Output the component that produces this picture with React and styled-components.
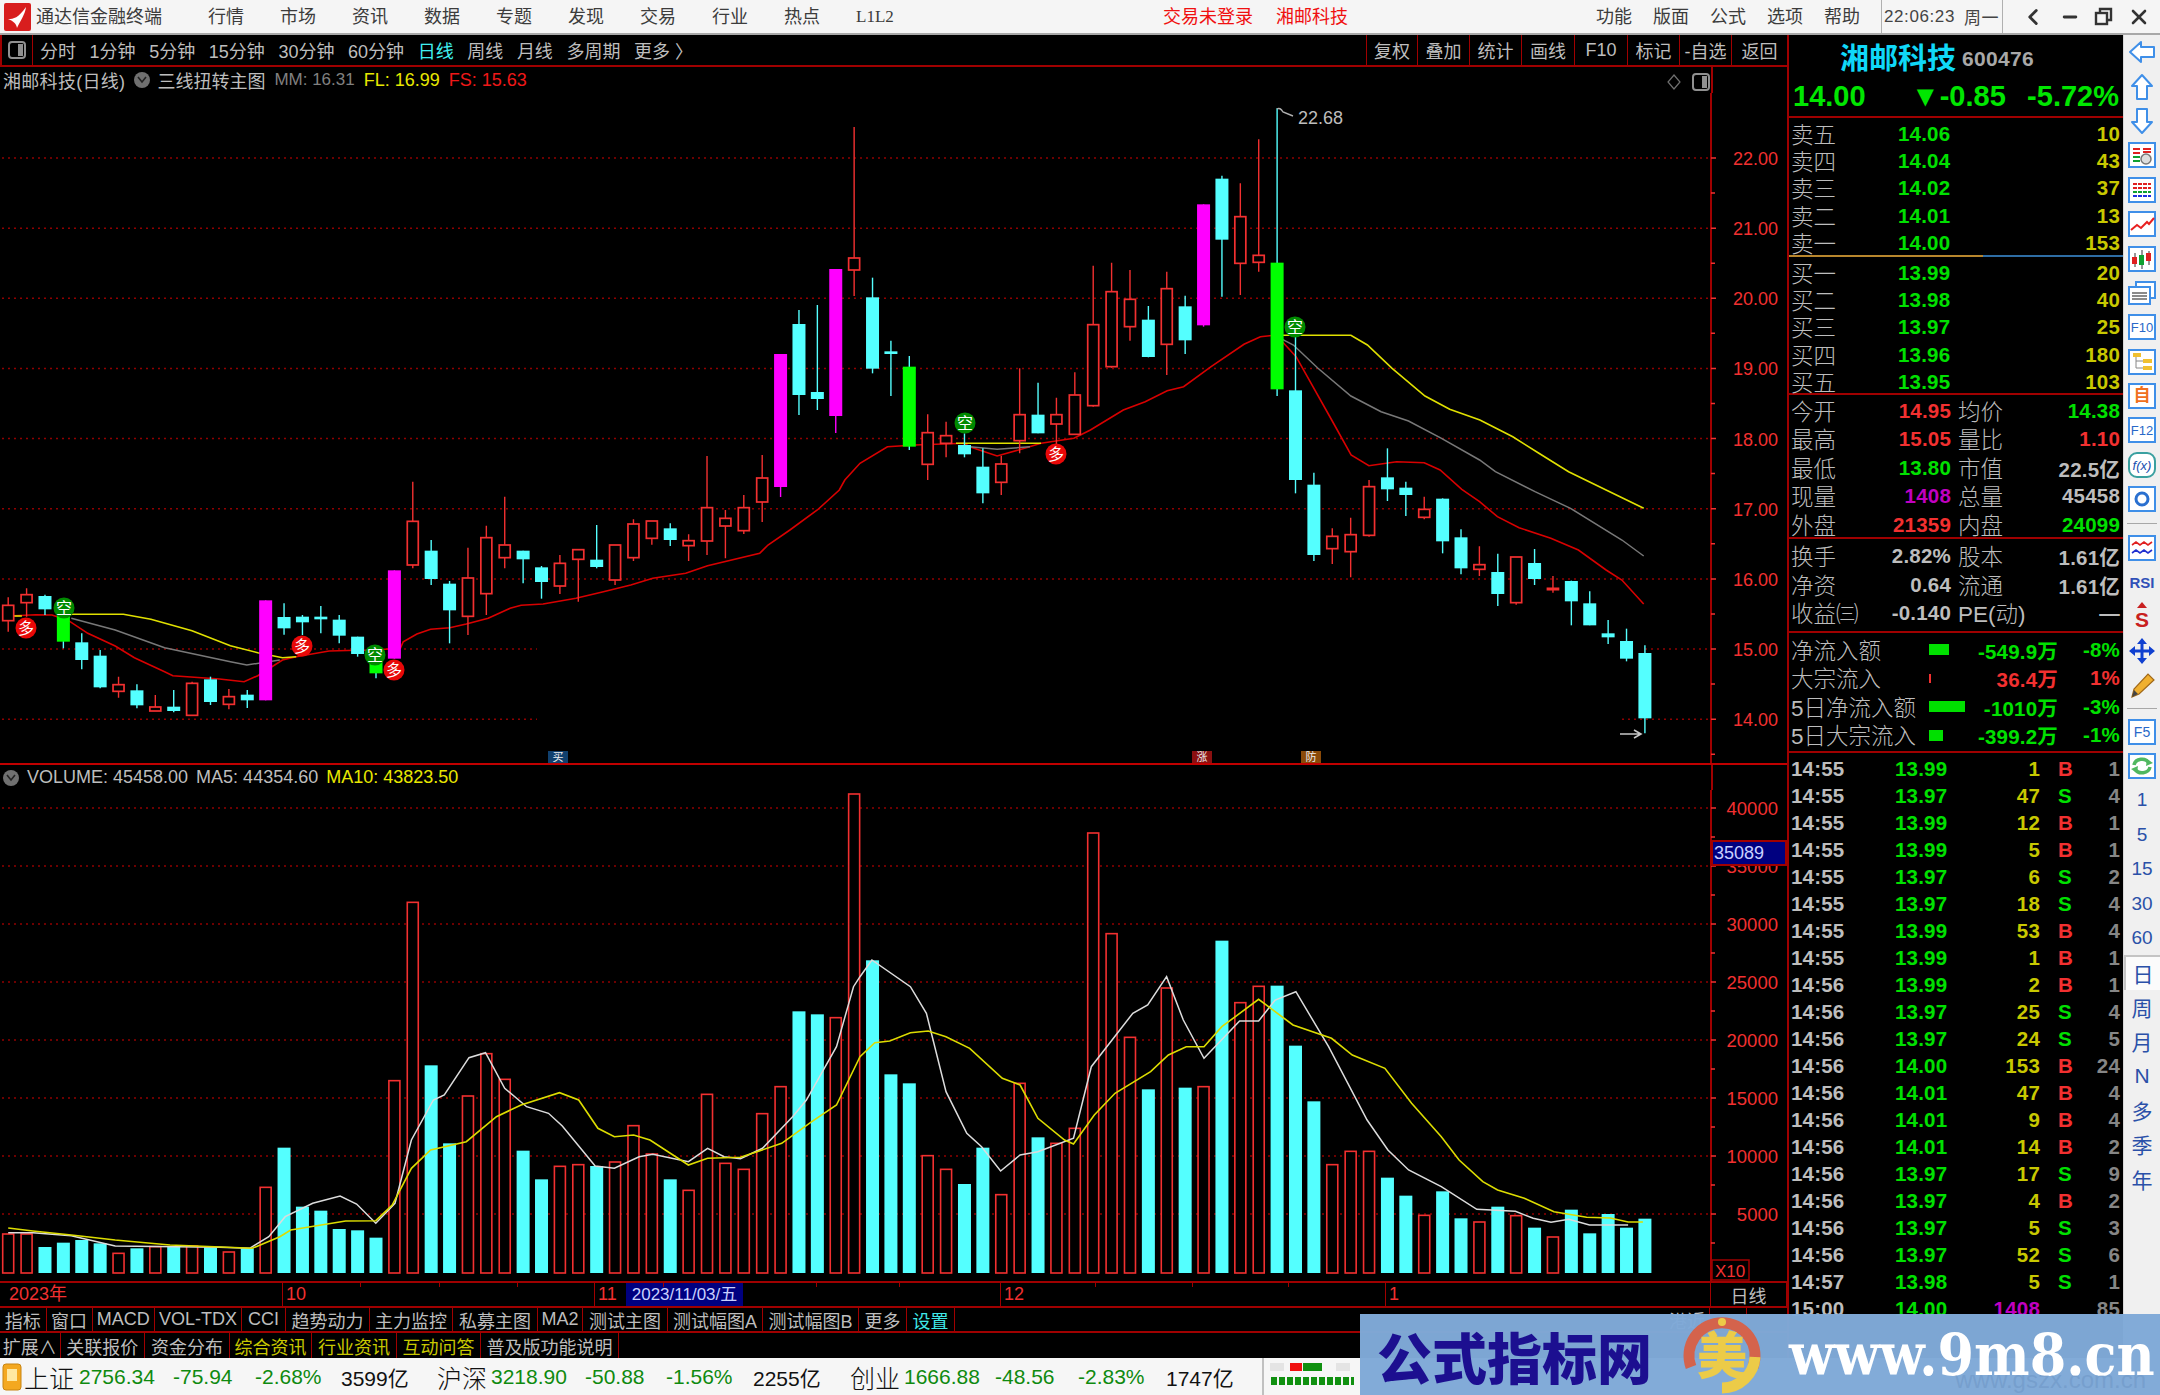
import React from 'react'
import styled, { createGlobalStyle } from 'styled-components'
import { ChevronLeft, Minus, X as CloseIcon } from 'lucide-react'

const SANS = `"Liberation Sans", "Noto Sans CJK SC", sans-serif`
const DARK_RED = '#a00000'
const GRID_RED = '#900000'
const UP = '#f23030'
const CYAN = '#54ffff'
const GREEN = '#00e000'
const YELLOW = '#c8c800'
const GRAY = '#bdbdbd'

const GlobalStyle = createGlobalStyle`
  html, body { margin: 0; padding: 0; background: #000; }
  body { font-family: ${SANS}; }
`

// ---------- chart data, traced off the screenshot ----------
// zones: how a traced crop maps back on to the page
const ZONES = {
  a: { x0: 0, fx: 1.823, y0: 480 },
  b: { x0: 860, fx: 1.823, y0: 100 },
  c: { x0: 1100, fx: 2.529, y0: 440 },
  v1: { x0: 0, fx: 1.823, y0: 760 },
  v2: { x0: 860, fx: 1.686, y0: 760 },
}
const line = (...parts) =>
  parts.flatMap(([z, pts]) => pts.map(([x, y]) => `${(ZONES[z].x0 + x / ZONES[z].fx).toFixed(1)},${(ZONES[z].y0 + y / 3).toFixed(1)}`)).join(' ')

const candleX = i => 8.2 + 18.39 * i

// [kind, high, low, top, bottom]
const candlesA = [
  ['r', 352, 455, 376, 422], ['r', 325, 410, 344, 368], ['c', 344, 405, 348, 388], ['g', 400, 505, 400, 485],
  ['c', 460, 568, 487, 540], ['c', 510, 625, 527, 622], ['r', 590, 653, 614, 634], ['c', 613, 685, 631, 676],
  ['r', 645, 693, 681, 693], ['c', 630, 697, 680, 693], ['r', 605, 706, 610, 706], ['c', 590, 675, 598, 666],
  ['r', 627, 688, 650, 673], ['c', 630, 684, 644, 661], ['m', 361, 661, 361, 661], ['c', 370, 464, 411, 445],
  ['c', 405, 465, 410, 427], ['c', 378, 460, 410, 418], ['c', 405, 490, 419, 467], ['c', 470, 530, 470, 522],
  ['g', 510, 595, 510, 580], ['m', 271, 536, 271, 536], ['r', 5, 265, 124, 255], ['c', 180, 315, 212, 297],
  ['c', 303, 490, 311, 391], ['r', 203, 465, 294, 409], ['r', 137, 405, 173, 341], ['r', 50, 265, 195, 233],
  ['c', 212, 310, 212, 238], ['c', 258, 356, 262, 306], ['r', 225, 342, 250, 318], ['r', 209, 365, 209, 238],
  ['c', 135, 265, 239, 261], ['r', 195, 315, 195, 300], ['r', 118, 243, 132, 233], ['r', 123, 194, 123, 175],
  ['c', 130, 198, 145, 180], ['r', 163, 243, 182, 197], ['r', -72, 225, 83, 183], ['r', 90, 235, 115, 138],
  ['r', 45, 162, 83, 152],
]
const candlesB = [
  ['r', 1065, 1266, 1134, 1206], ['m', 762, 1191, 762, 1161], ['c', 630, 945, 672, 885], ['c', 615, 930, 876, 897],
  ['m', 507, 999, 507, 948], ['r', 81, 588, 474, 510], ['c', 533, 820, 592, 806], ['c', 722, 888, 754, 762],
  ['g', 768, 1050, 800, 1040], ['r', 943, 1140, 998, 1093], ['r', 965, 1072, 1007, 1030], ['c', 1000, 1072, 1035, 1063],
  ['c', 1045, 1210, 1100, 1180], ['r', 1067, 1185, 1092, 1147], ['r', 805, 1060, 944, 1022], ['c', 848, 1000, 944, 1000],
  ['r', 893, 1035, 944, 972], ['r', 817, 1005, 885, 1003], ['r', 497, 920, 674, 917], ['r', 488, 803, 575, 800],
  ['r', 510, 722, 598, 680], ['c', 618, 772, 659, 771], ['r', 515, 825, 566, 733], ['c', 587, 762, 619, 721],
  ['m', 313, 680, 313, 676], ['c', 227, 590, 236, 419], ['r', 250, 585, 350, 490], ['r', 118, 515, 466, 487],
  ['g', 25, 888, 488, 868], ['c', 710, 1180, 871, 1140],
]
const candlesC = [
  ['c', 98, 363, 134, 345], ['r', 265, 372, 289, 326], ['r', 233, 412, 284, 335], ['r', 120, 290, 140, 286],
  ['c', 25, 183, 112, 148], ['c', 125, 228, 143, 165], ['r', 170, 238, 208, 232], ['c', 175, 340, 176, 304],
  ['c', 268, 403, 292, 385], ['r', 319, 408, 374, 388], ['c', 341, 498, 396, 462], ['r', 351, 494, 351, 488],
  ['c', 327, 435, 369, 417], ['r', 408, 458, 445, 449], ['c', 422, 556, 423, 484], ['c', 454, 556, 490, 556],
  ['c', 540, 612, 580, 592], ['c', 566, 664, 603, 656], ['c', 616, 880, 639, 835],
]
const toPage = (rows, y0) => rows.map(([kind, h, l, t, b]) => ({ kind, hi: y0 + h / 3, lo: y0 + l / 3, top: y0 + t / 3, bot: y0 + b / 3 }))
const candles = [...toPage(candlesA, 480), ...toPage(candlesB, 100), ...toPage(candlesC, 440)]

const redMa = line(
  ['a', [[15, 408], [65, 404], [95, 405], [125, 422], [160, 460], [210, 498], [245, 533], [300, 575], [315, 587], [400, 597], [445, 605], [470, 587], [515, 540], [540, 530], [600, 513], [650, 511], [680, 510], [730, 505], [735, 485], [760, 462], [785, 448], [820, 443], [850, 432], [890, 415], [930, 385], [950, 376], [990, 372], [1050, 355], [1100, 335], [1150, 315], [1190, 295], [1250, 280], [1290, 257], [1385, 220], [1400, 195], [1440, 150], [1490, 90], [1530, 30], [1540, 0]]],
  ['b', [[0, 1090], [50, 1040], [100, 1035], [190, 1030], [200, 1040], [250, 1068], [300, 1045], [330, 1030], [390, 1015], [420, 990], [480, 930], [520, 905], [560, 872], [590, 860], [640, 800], [700, 733], [730, 710], [760, 705], [770, 725], [795, 770], [860, 960]]],
  ['c', [[635, 45], [680, 77], [750, 65], [820, 68], [860, 90], [915, 148], [960, 185], [1005, 230], [1060, 263], [1140, 295], [1210, 330], [1280, 390], [1320, 420], [1375, 492]]],
)
const yellowMa = [
  line(['a', [[15, 408], [40, 408]]]),
  line(['a', [[130, 403], [225, 403], [275, 418], [350, 452], [420, 497], [470, 518], [515, 533], [540, 530]]]),
  line(['b', [[175, 1030], [330, 1030]]]),
  line(['b', [[770, 706], [895, 706], [925, 735], [970, 805], [1030, 888], [1075, 928], [1130, 960], [1190, 1010]]], ['c', [[1110, 40], [1185, 95], [1280, 150], [1375, 205]]]),
]
const grayMa = [
  line(['a', [[130, 415], [210, 450], [300, 503], [420, 545], [450, 555], [510, 540]]]),
  line(['b', [[200, 1040], [250, 1048], [310, 1040]]]),
  line(['b', [[770, 718], [790, 735], [835, 805], [895, 888], [950, 935], [1000, 963], [1060, 1015]]], ['c', [[960, 60], [1000, 95], [1100, 155], [1190, 205], [1320, 300], [1375, 348]]]),
]

const markers = [
  { x: 26, y: 628, text: '多' }, { x: 302, y: 646, text: '多' }, { x: 394, y: 670, text: '多' }, { x: 1056, y: 454, text: '多' },
  { x: 64, y: 608, text: '空' }, { x: 375, y: 655, text: '空' }, { x: 965, y: 423, text: '空' }, { x: 1295, y: 327, text: '空' },
]

const priceLevels = ['22.00', '21.00', '20.00', '19.00', '18.00', '17.00', '16.00', '15.00', '14.00'].map((label, i) => ({ label, y: 158 + 70.15 * i }))

// volume bars: [kind, top]
const volA = [
  ['r', 1422], ['r', 1422], ['c', 1461], ['c', 1448], ['c', 1440], ['c', 1450], ['r', 1480], ['c', 1465], ['r', 1460], ['c', 1460],
  ['r', 1458], ['c', 1462], ['r', 1476], ['c', 1465], ['r', 1282], ['c', 1163], ['c', 1340], ['c', 1352], ['c', 1407], ['c', 1411],
  ['c', 1433], ['r', 962], ['r', 427], ['c', 916], ['c', 1150], ['r', 1008], ['r', 881], ['r', 958], ['c', 1172], ['c', 1258],
  ['r', 1219], ['r', 1214], ['c', 1218], ['r', 1206], ['r', 1097], ['r', 1182], ['c', 1258], ['r', 1291], ['r', 1003], ['r', 1210],
  ['r', 1228], ['r', 1061], ['r', 980], ['c', 754], ['c', 763], ['r', 773], ['r', 102], ['c', 601], ['c', 943], ['c', 970],
  ['r', 1187], ['r', 1228], ['c', 1272], ['c', 1163], ['r', 1304], ['r', 970], ['c', 1132], ['r', 1150], ['r', 1105], ['r', 219],
  ['r', 521], ['r', 832], ['c', 988], ['r', 684], ['c', 983], ['r', 980], ['c', 542], ['r', 728], ['r', 679], ['c', 677],
  ['c', 857], ['c', 1024], ['r', 1214], ['r', 1174], ['r', 1174], ['c', 1253], ['c', 1307], ['r', 1366], ['c', 1294], ['c', 1375],
  ['r', 1386], ['c', 1340], ['r', 1367], ['c', 1403], ['r', 1431], ['c', 1349], ['c', 1420], ['c', 1362], ['c', 1403], ['c', 1376],
]
const volBars = volA.map(([kind, t]) => ({ kind, top: 760 + t / 3 }))
const VOL_BASE = 1273

const ma5 = line(
  ['v1', [[15, 1418], [60, 1418], [130, 1427], [210, 1458], [400, 1462], [455, 1465], [490, 1430], [520, 1370], [570, 1330], [620, 1308], [650, 1332], [685, 1390], [720, 1330], [750, 1140], [790, 1020], [810, 1005], [855, 893], [885, 878], [920, 985], [960, 1040], [1000, 1060], [1025, 1098], [1085, 1218], [1120, 1225], [1165, 1190], [1190, 1183], [1255, 1205], [1290, 1165], [1320, 1190], [1350, 1196], [1390, 1165], [1445, 1070], [1470, 1020], [1525, 860], [1556, 680]]],
  ['v2', [[0, 650], [20, 600], [85, 680], [112, 760], [145, 995], [180, 1120], [205, 1160], [237, 1233], [270, 1185], [300, 1175], [360, 1135], [390, 920], [460, 760], [485, 735], [517, 650], [545, 780], [580, 895], [640, 783], [672, 783], [700, 720], [735, 695], [790, 860], [855, 1080], [890, 1170], [925, 1230], [980, 1280], [1040, 1348], [1105, 1354], [1135, 1375], [1165, 1387], [1195, 1378], [1230, 1395], [1295, 1395]]],
)
const ma10 = line(
  ['v1', [[15, 1404], [60, 1413], [130, 1425], [210, 1440], [310, 1455], [460, 1465], [510, 1430], [530, 1410], [630, 1383], [685, 1382], [715, 1335], [750, 1225], [785, 1170], [850, 1145], [905, 1070], [950, 1035], [1020, 998], [1055, 1020], [1090, 1105], [1120, 1130], [1155, 1125], [1185, 1140], [1255, 1215], [1290, 1195], [1350, 1192], [1425, 1150], [1480, 1085], [1525, 1035]]],
  ['v2', [[0, 890], [25, 848], [50, 843], [85, 818], [115, 813], [145, 830], [185, 865], [240, 955], [270, 975], [300, 1075], [345, 1140], [360, 1152], [395, 1065], [430, 1000], [490, 935], [520, 885], [550, 860], [580, 860], [610, 800], [672, 718], [730, 795], [795, 835], [830, 885], [885, 925], [930, 1030], [980, 1130], [1010, 1200], [1050, 1265], [1075, 1290], [1120, 1315], [1170, 1355], [1225, 1372], [1265, 1374], [1295, 1386], [1320, 1386]]],
)
const volLevels = ['40000', '35000', '30000', '25000', '20000', '15000', '10000', '5000'].map((label, i) => ({ label, y: 808 + 58 * i }))

// ---------- quote data ----------
const sells = [['卖五', '14.06', '10'], ['卖四', '14.04', '43'], ['卖三', '14.02', '37'], ['卖二', '14.01', '13'], ['卖一', '14.00', '153']]
const buys = [['买一', '13.99', '20'], ['买二', '13.98', '40'], ['买三', '13.97', '25'], ['买四', '13.96', '180'], ['买五', '13.95', '103']]
const stats = [
  ['今开', '14.95', UP, '均价', '14.38', GREEN], ['最高', '15.05', UP, '量比', '1.10', UP], ['最低', '13.80', GREEN, '市值', '22.5亿', GRAY],
  ['现量', '1408', '#c000c0', '总量', '45458', GRAY], ['外盘', '21359', UP, '内盘', '24099', GREEN],
]
const shares = [['换手', '2.82%', '股本', '1.61亿'], ['净资', '0.64', '流通', '1.61亿'], ['收益㈢', '-0.140', 'PE(动)', '—']]
const flows = [
  ['净流入额', 20, 11, GREEN, '-549.9万', '-8%'], ['大宗流入', 2, 9, UP, '36.4万', '1%'],
  ['5日净流入额', 36, 11, GREEN, '-1010万', '-3%'], ['5日大宗流入', 14, 11, GREEN, '-399.2万', '-1%'],
]
const ticks = [
  ['14:55', '13.99', '1', 'B', '1'], ['14:55', '13.97', '47', 'S', '4'], ['14:55', '13.99', '12', 'B', '1'], ['14:55', '13.99', '5', 'B', '1'],
  ['14:55', '13.97', '6', 'S', '2'], ['14:55', '13.97', '18', 'S', '4'], ['14:55', '13.99', '53', 'B', '4'], ['14:55', '13.99', '1', 'B', '1'],
  ['14:56', '13.99', '2', 'B', '1'], ['14:56', '13.97', '25', 'S', '4'], ['14:56', '13.97', '24', 'S', '5'], ['14:56', '14.00', '153', 'B', '24'],
  ['14:56', '14.01', '47', 'B', '4'], ['14:56', '14.01', '9', 'B', '4'], ['14:56', '14.01', '14', 'B', '2'], ['14:56', '13.97', '17', 'S', '9'],
  ['14:56', '13.97', '4', 'B', '2'], ['14:56', '13.97', '5', 'S', '3'], ['14:56', '13.97', '52', 'S', '6'], ['14:57', '13.98', '5', 'S', '1'],
  ['15:00', '14.00', '1408', '', '85'],
]

// ---------- layout ----------
const Window = styled.div`
  position: relative;
  width: 2160px;
  height: 1395px;
  overflow: hidden;
  background: #000;
  display: flex;
  flex-direction: column;
`
const MenuBar = styled.div`
  height: 33px;
  flex: none;
  box-sizing: content-box;
  display: flex;
  align-items: center;
  background: #f5f5f5;
  border-bottom: 2px solid #a8a8a8;
  color: #3c3c3c;
  font-size: 18px;
`
const LeftMenu = styled.div`
  width: 1163px;
  flex: none;
  display: flex;
  align-items: center;
  padding-left: 4px;
  box-sizing: border-box;
  line-height: 30px;
`
const AppTitle = styled.span`
  margin: 0 46px 0 5px;
`
const MenuItem = styled.span`
  margin-right: 36px;
  font-family: ${p => (p.$serif ? '"Liberation Serif", serif' : 'inherit')};
  font-size: ${p => (p.$serif ? '17px' : '18px')};
`
const AlertGroup = styled.div`
  display: flex;
  gap: 23px;
  color: #f01010;
  line-height: 30px;
  height: 30px;
`
const RightMenu = styled.div`
  margin-left: auto;
  display: flex;
  align-items: center;
  height: 100%;
`
const RightItem = styled.span`
  margin-right: 21px;
  line-height: 30px;
  height: 30px;
`
const ClockCell = styled.div`
  height: 100%;
  display: flex;
  align-items: center;
  gap: 9px;
  padding: 0 0 0 2px;
  width: 122px;
  box-sizing: border-box;
  border-left: 1px solid #b0b0b0;
  border-right: 1px solid #b0b0b0;
  font-size: 17px;
  color: #444;
  letter-spacing: 0.6px;
`
const WindowButtons = styled.div`
  width: 157px;
  display: flex;
  align-items: center;
  justify-content: space-around;
  padding: 0 2px 0 10px;
  box-sizing: border-box;
  color: #333;
`

const Body = styled.div`
  flex: 1;
  min-height: 0;
  display: flex;
`
const Main = styled.div`
  width: 1787px;
  flex: none;
  display: flex;
  flex-direction: column;
`
const ToolStrip = styled.div`
  height: 30px;
  flex: none;
  display: flex;
  align-items: center;
  border-bottom: 2px solid ${DARK_RED};
  color: ${GRAY};
  font-size: 18px;
`
const ToggleCell = styled.div`
  width: 33px;
  height: 100%;
  flex: none;
  display: flex;
  align-items: center;
  justify-content: center;
  border-left: 2px solid ${DARK_RED};
  border-right: 1px solid ${DARK_RED};
  box-sizing: border-box;
`
const PeriodList = styled.div`
  display: flex;
  gap: 13.6px;
  padding-left: 7px;
`
const Period = styled.span`
  color: ${p => (p.$active ? '#40f0f0' : GRAY)};
`
const ToolCells = styled.div`
  margin-left: auto;
  height: 100%;
  display: flex;
`
const ToolCell = styled.div`
  width: ${p => p.$w}px;
  box-sizing: border-box;
  display: flex;
  align-items: center;
  justify-content: center;
  border-left: 1px solid ${DARK_RED};
`
const HeaderRow = styled.div`
  height: ${p => p.$h}px;
  flex: none;
  display: flex;
  align-items: center;
  color: ${GRAY};
  font-size: 18px;
`
const HeaderText = styled.div`
  flex: 1;
  display: flex;
  align-items: center;
  padding-left: ${p => p.$pad}px;
`
const HeaderValue = styled.span`
  color: ${p => p.$c || GRAY};
  margin-left: ${p => p.$gap || 0}px;
  font-size: ${p => p.$size || 18}px;
  white-space: nowrap;
`
const Cjk = styled.span`
  font-size: 18px;
  color: ${GRAY};
  letter-spacing: ${p => p.$track || 0}px;
`
const RoundIcon = styled.span`
  width: 16px;
  height: 16px;
  border-radius: 50%;
  background: #707070;
  margin: 0 ${p => p.$right}px 0 ${p => p.$left}px;
  display: inline-flex;
  align-items: center;
  justify-content: center;
`
const AxisHead = styled.div`
  width: 76px;
  height: 100%;
  flex: none;
  box-sizing: border-box;
  border-left: 2px solid ${DARK_RED};
  display: flex;
  align-items: center;
  gap: 16px;
  margin-left: auto;
  position: relative;
`
const AxisHeadIcons = styled.div`
  position: absolute;
  right: 76px;
  top: 5px;
  display: flex;
  align-items: center;
  gap: 10px;
`
const ChartSvg = styled.svg`
  display: block;
  flex: none;
  text {
    font-family: ${SANS};
  }
`
const PriceFrame = styled.div`
  flex: none;
  border-bottom: 2px solid #c00000;
`
const VolumeFrame = styled.div`
  flex: none;
  border-bottom: 2px solid ${DARK_RED};
`

const TimeRow = styled.div`
  position: relative;
  height: 23px;
  flex: none;
  display: flex;
  border-bottom: 2px solid ${DARK_RED};
`
const TimeCell = styled.div`
  width: ${p => p.$w}px;
  flex: none;
  box-sizing: border-box;
  border-right: 1px solid ${DARK_RED};
  padding-left: ${p => p.$pad || 3}px;
  color: ${UP};
  font-size: 18px;
  line-height: 23px;
`
const PeriodBox = styled.div`
  flex: 1;
  display: flex;
  align-items: center;
  justify-content: center;
  color: ${GRAY};
  font-size: 18px;
  border-right: 1px solid ${DARK_RED};
`
const DateBadge = styled.div`
  position: absolute;
  left: 626px;
  top: 0;
  width: 117px;
  height: 23px;
  background: #000080;
  color: #c8d0ff;
  font-size: 17px;
  line-height: 23px;
  text-align: center;
`
const TimeTick = styled.i`
  position: absolute;
  top: 0;
  left: ${p => p.$x}px;
  width: 1px;
  height: 4px;
  background: ${DARK_RED};
`
const TabRow = styled.div`
  height: ${p => p.$h}px;
  flex: none;
  display: flex;
  box-sizing: border-box;
  border-bottom: 2px solid ${DARK_RED};
`
const Tab = styled.div`
  width: ${p => p.$w}px;
  flex: none;
  box-sizing: border-box;
  border-right: 1px solid ${DARK_RED};
  display: flex;
  align-items: center;
  justify-content: center;
  white-space: nowrap;
  font-size: 18px;
  color: ${p => p.$c || GRAY};
`
const TabGap = styled.div`
  width: ${p => p.$w}px;
  flex: none;
`

const Side = styled.div`
  flex: 1;
  display: flex;
  min-width: 0;
`
const Quote = styled.div`
  width: 336px;
  flex: none;
  box-sizing: border-box;
  border-left: 2px solid ${DARK_RED};
  overflow: hidden;
`
const QuoteHead = styled.div`
  height: 83px;
  box-sizing: border-box;
  border-bottom: 2px solid ${DARK_RED};
`
const TitleLine = styled.div`
  height: 41px;
  display: flex;
  align-items: center;
  justify-content: flex-start;
  padding-left: 51px;
`
const StockName = styled.span`
  color: #10d8f8;
  font-size: 29px;
  font-weight: 700;
`
const StockCode = styled.span`
  color: #a8a8a8;
  font-size: 21px;
  font-weight: 700;
  margin: 6px 0 0 6px;
  letter-spacing: 0.3px;
`
const PriceLine = styled.div`
  height: 40px;
  display: grid;
  grid-template-columns: 118px 112px 1fr;
  align-items: center;
  padding: 0 4px 0 4px;
  color: #00e600;
  font-size: 29px;
  font-weight: 700;
  white-space: nowrap;
`
const BigPrice = styled.span`
  font-size: 29px;
`
const RightAligned = styled.span`
  text-align: right;
`
const Section = styled.div`
  padding: ${p => p.$pt || 0}px 0 ${p => p.$pb || 0}px;
  border-bottom: ${p => (p.$bare ? 'none' : `2px solid ${DARK_RED}`)};
`
const MidLine = styled.div`
  height: 2px;
  margin-top: 1px;
  background: linear-gradient(to right, #b8862d 58%, #2e6da4 58%);
`
const Row = styled.div`
  height: ${p => p.$h}px;
  display: grid;
  grid-template-columns: ${p => p.$cols};
  align-items: center;
  padding: 0 3px 0 2px;
  white-space: nowrap;
`
const Label = styled.span`
  color: ${GRAY};
  font-size: 22.5px;
  font-weight: 300;
  transform: translateY(-1.5px);
`
const SmallLabel = styled(Label)`
  padding-left: ${p => p.$pad || 0}px;
`
const Num = styled.span`
  color: ${p => p.$c || GRAY};
  font-size: 20.5px;
  font-weight: 700;
  text-align: ${p => (p.$right ? 'right' : 'left')};
  padding-left: ${p => p.$pad || 0}px;
  letter-spacing: 0.2px;
`
const FlowBar = styled.i`
  display: block;
  width: ${p => p.$w}px;
  height: ${p => p.$h}px;
  background: ${p => p.$c};
`

const Rail = styled.div`
  flex: 1;
  background: #f0f0f0;
  display: flex;
  flex-direction: column;
  align-items: stretch;
  padding-top: 0;
  border-left: 1px solid #d8d8d8;
`
const RailItem = styled.div`
  height: 34.4px;
  flex: none;
  display: flex;
  align-items: center;
  justify-content: center;
  color: #2a50a8;
  font-size: ${p => (p.$big ? 21 : 19)}px;
  box-sizing: border-box;
  ${p => p.$active && 'background: #fbfbfb; border-top: 2px solid #c4c4c4; border-left: 2px solid #c4c4c4;'}
`
const RailDivider = styled.div`
  height: ${p => p.$h}px;
  flex: none;
  display: flex;
  align-items: center;
  &::after {
    content: '';
    width: 100%;
    height: 1px;
    margin: 0 3px;
    background: #a8a8a8;
  }
`

const StatusBar = styled.div`
  height: 37px;
  flex: none;
  display: flex;
  align-items: center;
  background: #f6f6f6;
  font-size: 21px;
  color: #111;
  overflow: hidden;
`
const StatusIcon = styled.div`
  width: 24px;
  flex: none;
  display: flex;
  padding-left: 2px;
  box-sizing: border-box;
`
const StatusItem = styled.span`
  width: ${p => p.$w}px;
  flex: none;
  white-space: nowrap;
  color: ${p => p.$c || '#111'};
  font-size: ${p => p.$size || 21}px;
  font-weight: ${p => (p.$thin ? 300 : 400)};
`
const StatusMini = styled.div`
  height: 100%;
  flex: none;
  width: 100px;
  border-left: 2px solid #c0c0c0;
  display: flex;
  align-items: center;
`

const Watermark = styled.div`
  position: absolute;
  right: 0;
  bottom: 0;
  width: 800px;
  height: 81px;
  background: rgba(127, 169, 215, 0.98);
  display: flex;
  align-items: center;
  overflow: hidden;
`
const MarkTitle = styled.span`
  flex: none;
  color: #1c0f90;
  font-family: "Noto Sans CJK SC", sans-serif;
  font-weight: 900;
  font-size: 55px;
  margin: 0 30px 0 17px;
  white-space: nowrap;
`
const MarkLogoBox = styled.div`
  flex: none;
  width: 80px;
  height: 80px;
`
const MarkUrl = styled.span`
  flex: none;
  color: #fff;
  font-family: "DejaVu Serif", serif;
  font-weight: 700;
  font-size: 52.5px;
  margin-left: 27px;
  white-space: nowrap;
  transform: scaleY(1.12);
`
const MarkGhost = styled.span`
  position: absolute;
  right: 14px;
  bottom: 1px;
  font-size: 24px;
  color: rgba(90, 130, 180, 0.3);
`

// ---------- small drawings ----------
const Logo = () => (
  <svg width="27" height="28" viewBox="0 0 27 28">
    <rect width="27" height="28" rx="2" fill="#d81e1e" />
    <path d="M4 16 C10 16 14 15 22 4 C21 12 16 18 13 25 C12 20 9 18 4 16 Z" fill="#fff" />
  </svg>
)
const ToggleIcon = () => (
  <svg width="20" height="20" viewBox="0 0 20 20">
    <rect x="2" y="2" width="16" height="16" rx="3" fill="none" stroke="#909090" strokeWidth="2" />
    <rect x="11" y="4" width="5" height="12" fill="#909090" />
  </svg>
)
const Chevron = () => (
  <svg width="10" height="8" viewBox="0 0 10 8"><path d="M1 1 L5 6 L9 1" fill="none" stroke="#222" strokeWidth="1.6" /></svg>
)
const RestoreIcon = () => (
  <svg width="19" height="19" viewBox="0 0 19 19" fill="none" stroke="#333" strokeWidth="2.4">
    <rect x="2" y="6" width="11" height="11" />
    <path d="M6 5 V2 H17 V13 H14" />
  </svg>
)

const BLUE = '#3f8fe8'
const BoxIcon = ({ children }) => (
  <svg width="30" height="28" viewBox="0 0 30 28">
    <rect x="2" y="2" width="26" height="24" fill="#fff" stroke={BLUE} strokeWidth="2" />
    {children}
  </svg>
)
const ArrowIcon = ({ d }) => (
  <svg width="30" height="28" viewBox="0 0 30 28"><path d={d} fill="#fff" stroke={BLUE} strokeWidth="2" strokeLinejoin="round" /></svg>
)
const BoxText = ({ children, c = '#2a68c8', size = 13, weight = 400 }) => (
  <text x="15" y="19" textAnchor="middle" fontSize={size} fontWeight={weight} fill={c} fontFamily={SANS}>{children}</text>
)

const railIcons = [
  <ArrowIcon d="M3 14 L14 4 V9 H27 V19 H14 V24 Z" />,
  <ArrowIcon d="M15 2 L25 13 H20 V26 H10 V13 H5 Z" />,
  <ArrowIcon d="M15 26 L25 15 H20 V2 H10 V15 H5 Z" />,
  <BoxIcon>
    <path d="M6 8 H13 M6 12 H13" stroke="#e02020" strokeWidth="2" /><path d="M6 16 H13 M6 20 H13" stroke="#10a030" strokeWidth="2" />
    <path d="M16 8 H24 M16 11 H24" stroke="#e02020" strokeWidth="2" /><circle cx="19" cy="18" r="5" fill="#ddd" stroke="#777" strokeWidth="1.5" />
  </BoxIcon>,
  <BoxIcon>
    <path d="M6 8 H24" stroke="#e02020" strokeWidth="2" strokeDasharray="4 1" /><path d="M6 12 H24" stroke="#e02020" strokeWidth="2" strokeDasharray="4 1" />
    <path d="M6 16 H24" stroke="#10a030" strokeWidth="2" strokeDasharray="4 1" /><path d="M6 20 H24" stroke="#2030e0" strokeWidth="2" strokeDasharray="4 1" />
  </BoxIcon>,
  <BoxIcon><path d="M4 20 L10 15 L14 18 L20 12 L22 14 L27 8" fill="none" stroke="#e82020" strokeWidth="2" /></BoxIcon>,
  <BoxIcon>
    <path d="M8 8 V22 M15 5 V24 M22 6 V20" stroke="#333" strokeWidth="1" />
    <rect x="5" y="12" width="5" height="7" fill="#e02020" /><rect x="12" y="10" width="5" height="10" fill="#10a030" /><rect x="19" y="8" width="5" height="8" fill="#e02020" />
  </BoxIcon>,
  <svg width="30" height="28" viewBox="0 0 30 28" fill="#fff" stroke={BLUE} strokeWidth="2">
    <rect x="9" y="3" width="19" height="16" /><rect x="2" y="8" width="21" height="17" />
    <path d="M5 14 H20 M5 17 H20 M5 20 H20" stroke="#666" strokeWidth="1.5" />
  </svg>,
  <BoxIcon><BoxText>F10</BoxText></BoxIcon>,
  <BoxIcon>
    <rect x="6" y="5" width="8" height="4" fill="#f0c030" /><rect x="16" y="11" width="9" height="4" fill="#f0c030" /><rect x="16" y="18" width="9" height="4" fill="#f0c030" />
    <path d="M9 9 V20 H16 M9 13 H16" fill="none" stroke="#888" />
  </BoxIcon>,
  <BoxIcon><BoxText c="#f07020" size={17} weight={700}>自</BoxText></BoxIcon>,
  <BoxIcon><BoxText>F12</BoxText></BoxIcon>,
  <svg width="30" height="28" viewBox="0 0 30 28">
    <rect x="2" y="2" width="26" height="24" rx="8" fill="#fff" stroke="#3aa0a0" strokeWidth="2" />
    <text x="15" y="19" textAnchor="middle" fontSize="13" fontStyle="italic" fill="#2050b0" fontFamily={SANS}>f(x)</text>
  </svg>,
  <BoxIcon><circle cx="15" cy="14" r="6" fill="none" stroke="#2a70d0" strokeWidth="3" /></BoxIcon>,
  <BoxIcon>
    <path d="M5 11 L9 8 L13 11 L17 8 L21 11 L25 8" fill="none" stroke="#e02020" strokeWidth="1.6" />
    <path d="M5 19 L9 16 L13 19 L17 16 L21 19 L25 16" fill="none" stroke="#2030d0" strokeWidth="1.6" />
  </BoxIcon>,
  <svg width="30" height="28" viewBox="0 0 30 28"><text x="15" y="20" textAnchor="middle" fontSize="15" fontWeight="700" fill="#3050b8" fontFamily={SANS}>RSI</text></svg>,
  <svg width="30" height="28" viewBox="0 0 30 28">
    <text x="15" y="25" textAnchor="middle" fontSize="21" fontWeight="700" fill="#c82020" fontFamily={SANS}>S</text>
    <path d="M15 0 L20 6 H10 Z" fill="#c82020" />
  </svg>,
  <svg width="30" height="28" viewBox="0 0 30 28" fill="#1040d0">
    <path d="M15 1 L20 7 H10 Z M15 27 L20 21 H10 Z M2 14 L8 9 V19 Z M28 14 L22 9 V19 Z" />
    <path d="M15 7 V21 M8 14 H22" stroke="#1040d0" strokeWidth="3" />
  </svg>,
  <svg width="30" height="28" viewBox="0 0 30 28">
    <path d="M5 26 L7 18 L21 3 L27 9 L12 23 Z" fill="#f0b030" stroke="#a06818" strokeWidth="1.2" />
    <path d="M5 26 L7 19 L11 23 Z" fill="#444" />
  </svg>,
  <BoxIcon><BoxText size={14}>F5</BoxText></BoxIcon>,
  <BoxIcon>
    <path d="M7 13 A8 7 0 0 1 22 11 M23 15 A8 7 0 0 1 8 17" fill="none" stroke="#50b860" strokeWidth="3.5" />
    <path d="M20 7 L26 11 L19 14 Z M10 21 L4 17 L11 14 Z" fill="#50b860" />
  </BoxIcon>,
]
const railTextItems = ['1', '5', '15', '30', '60']
const railPeriodItems = ['日', '周', '月', 'N', '多', '季', '年']

const Candle = ({ c, i }) => {
  const x = candleX(i)
  const w = 13
  if (c.kind === 'r') {
    return (
      <g stroke={UP} strokeWidth="1.7">
        <path d={`M${x} ${c.hi} V${c.top} M${x} ${c.bot} V${c.lo}`} strokeWidth="1.4" fill="none" />
        <rect x={x - w / 2 + 1} y={c.top} width={w - 2} height={Math.max(c.bot - c.top, 1)} fill="#000" />
      </g>
    )
  }
  const fill = c.kind === 'c' ? CYAN : c.kind === 'm' ? '#ff00ff' : '#00ff00'
  const wick = c.kind === 'm' ? '#ff00ff' : CYAN
  return (
    <g>
      <path d={`M${x} ${c.hi} V${c.lo}`} stroke={wick} strokeWidth="1.4" />
      <rect x={x - w / 2} y={c.top} width={w} height={c.bot - c.top} fill={fill} />
    </g>
  )
}

const Signal = ({ x, text, fill }) => (
  <g>
    <rect x={x - 10} y="751" width="20" height="12" fill={fill} />
    <text x={x} y="761" textAnchor="middle" fontSize="11" fill="#eee">{text}</text>
  </g>
)

const PriceChart = () => (
  <ChartSvg width="1787" height="670" viewBox="0 93 1787 670">
    {priceLevels.map(({ y }, i) => (
      i < 7
        ? <line key={y} x1="2" x2="1711" y1={y} y2={y} stroke={GRID_RED} strokeWidth="1.5" strokeDasharray="2 4" />
        : (
          <g key={y} stroke={GRID_RED} strokeWidth="1.5" strokeDasharray="2 4">
            <line x1="2" x2="537" y1={y} y2={y} />
            <line x1={i === 7 ? 1645 : 1622} x2="1711" y1={y} y2={y} />
          </g>
        )
    ))}
    <line x1="1711" x2="1711" y1="93" y2="763" stroke={DARK_RED} strokeWidth="2" />
    {priceLevels.map(({ label, y }) => (
      <g key={label}>
        <path d={`M1711 ${y} h5 M1711 ${y + 35} h4`} stroke={UP} strokeWidth="1.5" />
        <text x="1778" y={y + 7} textAnchor="end" fontSize="18" fill={UP}>{label}</text>
      </g>
    ))}
    <polyline points={redMa} fill="none" stroke="#d80000" strokeWidth="1.6" />
    {grayMa.map(points => <polyline key={points} points={points} fill="none" stroke="#787878" strokeWidth="1.5" />)}
    {yellowMa.map(points => <polyline key={points} points={points} fill="none" stroke="#e0e000" strokeWidth="1.6" />)}
    {candles.map((c, i) => <Candle key={i} c={c} i={i} />)}
    {markers.map(m => (
      <g key={`${m.x}-${m.y}`}>
        <circle cx={m.x} cy={m.y} r="10.5" fill={m.text === '多' ? '#e80808' : '#008a00'} />
        <text x={m.x} y={m.y + 6} textAnchor="middle" fontSize="16" fill="#fff">{m.text}</text>
      </g>
    ))}
    <path d="M1277 109 q3 -2 6 3 l10 4" fill="none" stroke="#b0b0b0" strokeWidth="1.4" />
    <text x="1298" y="124" fontSize="18" fill={GRAY}>22.68</text>
    <path d="M1620 734 H1641 M1634 730 L1641 734 L1634 738" fill="none" stroke="#c8c8c8" strokeWidth="1.6" />
    <Signal x={558} text="买" fill="#10406e" />
    <Signal x={1202} text="涨" fill="#8a1010" />
    <Signal x={1311} text="防" fill="#8a4a08" />
  </ChartSvg>
)

const VolumeChart = () => (
  <ChartSvg width="1787" height="491" viewBox="0 790 1787 491">
    {volLevels.map(({ y }) => <line key={y} x1="2" x2="1711" y1={y} y2={y} stroke={GRID_RED} strokeWidth="1.5" strokeDasharray="2 4" />)}
    <line x1="1711" x2="1711" y1="790" y2="1281" stroke={DARK_RED} strokeWidth="2" />
    {volLevels.map(({ label, y }) => (
      <g key={label}>
        <path d={`M1711 ${y} h5 M1711 ${y + 29} h4`} stroke={UP} strokeWidth="1.5" />
        <text x="1778" y={y + 7} textAnchor="end" fontSize="18.5" fill={UP}>{label}</text>
      </g>
    ))}
    {volBars.map((b, i) => (
      b.kind === 'c'
        ? <rect key={i} x={candleX(i) - 6.5} y={b.top} width="13" height={VOL_BASE - b.top} fill={CYAN} />
        : <rect key={i} x={candleX(i) - 5.5} y={b.top} width="11" height={VOL_BASE - b.top} fill="#000" stroke={UP} strokeWidth="1.6" />
    ))}
    <polyline points={ma5} fill="none" stroke="#dcdcdc" strokeWidth="1.5" />
    <polyline points={ma10} fill="none" stroke="#dcdc00" strokeWidth="1.6" />
    <rect x="1712" y="841" width="74" height="24" fill="#000080" stroke={DARK_RED} strokeWidth="2" />
    <text x="1714" y="859" fontSize="18" fill="#c8d0ff">35089</text>
    <rect x="1712" y="1260" width="37" height="20" fill="#000" stroke={DARK_RED} strokeWidth="1.5" />
    <text x="1715" y="1277" fontSize="17" fill={UP}>X10</text>
  </ChartSvg>
)

const TabsA = [
  ['指标', 46.5], ['窗口', 46], ['MACD', 62.5], ['VOL-TDX', 87], ['CCI', 44], ['趋势动力', 84], ['主力监控', 83], ['私募主图', 85],
  ['MA2', 45], ['测试主图', 85], ['测试幅图A', 95], ['测试幅图B', 96], ['更多', 48], ['设置', 48, '#40e8e8'],
]
const TabsB = [
  ['扩展∧', 60.6], ['关联报价', 84.4], ['资金分布', 85], ['综合资讯', 82, YELLOW], ['行业资讯', 85, YELLOW], ['互动问答', 84, YELLOW], ['普及版功能说明', 138],
]
const timeTicks = [360, 439, 517, 663, 816, 899, 1095, 1192, 1288]

const BottomTabs = () => (
  <>
    <TimeRow>
      <TimeCell $w={283} $pad={9}>2023年</TimeCell>
      <TimeCell $w={312}>10</TimeCell>
      <TimeCell $w={406}>11</TimeCell>
      <TimeCell $w={385}>12</TimeCell>
      <TimeCell $w={325}>1</TimeCell>
      <PeriodBox>日线</PeriodBox>
      <DateBadge>2023/11/03/五</DateBadge>
      {timeTicks.map(x => <TimeTick key={x} $x={x} />)}
    </TimeRow>
    <TabRow $h={25}>
      {TabsA.map(([text, w, c]) => <Tab key={text} $w={w} $c={c}>{text}</Tab>)}
      <TabGap $w={710} />
      <Tab $w={45}>港近</Tab>
      <Tab $w={37} />
    </TabRow>
    <TabRow $h={27}>
      {TabsB.map(([text, w, c]) => <Tab key={text} $w={w} $c={c}>{text}</Tab>)}
    </TabRow>
  </>
)

const QuotePanel = () => (
  <Quote>
    <QuoteHead>
      <TitleLine>
        <StockName>湘邮科技</StockName>
        <StockCode>600476</StockCode>
      </TitleLine>
      <PriceLine>
        <BigPrice>14.00</BigPrice>
        <span>▼-0.85</span>
        <RightAligned>-5.72%</RightAligned>
      </PriceLine>
    </QuoteHead>
    <Section $bare>
      {sells.map(([l, p, q]) => (
        <Row key={l} $h={27.2} $cols="107px 1fr auto"><Label>{l}</Label><Num $c={GREEN}>{p}</Num><Num $c={YELLOW} $right>{q}</Num></Row>
      ))}
    </Section>
    <MidLine />
    <Section>
      {buys.map(([l, p, q]) => (
        <Row key={l} $h={27.2} $cols="107px 1fr auto"><Label>{l}</Label><Num $c={GREEN}>{p}</Num><Num $c={YELLOW} $right>{q}</Num></Row>
      ))}
    </Section>
    <Section>
      {stats.map(([l1, v1, c1, l2, v2, c2]) => (
        <Row key={l1} $h={28.5} $cols="60px 100px 67px 1fr">
          <Label>{l1}</Label><Num $c={c1} $right>{v1}</Num><SmallLabel $pad={7}>{l2}</SmallLabel><Num $c={c2} $right>{v2}</Num>
        </Row>
      ))}
    </Section>
    <Section $pt={1} $pb={5}>
      {shares.map(([l1, v1, l2, v2]) => (
        <Row key={l1} $h={28.5} $cols="60px 100px 67px 1fr">
          <Label>{l1}</Label><Num $right>{v1}</Num><SmallLabel $pad={7}>{l2}</SmallLabel><Num $right>{v2}</Num>
        </Row>
      ))}
    </Section>
    <Section $pt={1} $pb={4}>
      {flows.map(([l, w, h, c, v, pct]) => (
        <Row key={l} $h={28.4} $cols="138px 40px 1fr 62px">
          <Label>{l}</Label><FlowBar $w={w} $h={h} $c={c} /><Num $c={c} $right>{v}</Num><Num $c={c} $right>{pct}</Num>
        </Row>
      ))}
    </Section>
    <Section $bare $pt={2}>
      {ticks.map(([t, p, q, side, n], i) => (
        <Row key={i} $h={27} $cols="104px 60px 85px 36px 1fr">
          <Num>{t}</Num>
          <Num $c={GREEN}>{p}</Num>
          <Num $c={side ? YELLOW : '#c000c0'} $right>{q}</Num>
          <Num $c={side === 'B' ? UP : GREEN} $pad={18}>{side}</Num>
          <Num $c="#868686" $right>{n}</Num>
        </Row>
      ))}
    </Section>
  </Quote>
)

const ToolRail = () => (
  <Rail>
    {railIcons.slice(0, 14).map((icon, i) => <RailItem key={i}>{icon}</RailItem>)}
    <RailDivider $h={14} />
    {railIcons.slice(14, 19).map((icon, i) => <RailItem key={i}>{icon}</RailItem>)}
    <RailDivider $h={12} />
    {railIcons.slice(19).map((icon, i) => <RailItem key={i}>{icon}</RailItem>)}
    {railTextItems.map(t => <RailItem key={t}>{t}</RailItem>)}
    {railPeriodItems.map(t => <RailItem key={t} $big $active={t === '日'}>{t}</RailItem>)}
  </Rail>
)

const StatusGreen = '#0f8a0f'
const Status = () => (
  <StatusBar>
    <StatusIcon>
      <svg width="20" height="28" viewBox="0 0 20 28">
        <rect x="1" y="1" width="18" height="26" rx="3" fill="#f4a820" stroke="#c88410" />
        <rect x="5" y="6" width="10" height="12" fill="#ffe8a0" />
      </svg>
    </StatusIcon>
    <StatusItem $w={55} $size={25} $thin>上证</StatusItem>
    <StatusItem $w={94} $c={StatusGreen}>2756.34</StatusItem>
    <StatusItem $w={82} $c={StatusGreen}>-75.94</StatusItem>
    <StatusItem $w={86} $c={StatusGreen}>-2.68%</StatusItem>
    <StatusItem $w={96}>3599亿</StatusItem>
    <StatusItem $w={54} $size={25} $thin>沪深</StatusItem>
    <StatusItem $w={94} $c={StatusGreen}>3218.90</StatusItem>
    <StatusItem $w={81} $c={StatusGreen}>-50.88</StatusItem>
    <StatusItem $w={87} $c={StatusGreen}>-1.56%</StatusItem>
    <StatusItem $w={97}>2255亿</StatusItem>
    <StatusItem $w={54} $size={25} $thin>创业</StatusItem>
    <StatusItem $w={91} $c={StatusGreen}>1666.88</StatusItem>
    <StatusItem $w={83} $c={StatusGreen}>-48.56</StatusItem>
    <StatusItem $w={88} $c={StatusGreen}>-2.83%</StatusItem>
    <StatusItem $w={96}>1747亿</StatusItem>
    <StatusMini>
      <svg width="100" height="30" viewBox="0 0 100 30">
        <g fill="#e4e4e4">
          <rect x="6" y="1" width="14" height="8" /><rect x="72" y="1" width="14" height="8" />
        </g>
        <rect x="26" y="1" width="12" height="8" fill="#f01010" />
        <rect x="39" y="1" width="19" height="8" fill="#109010" />
        <path d="M7 17 H90 M7 21 H90" stroke="#109010" strokeWidth="4" strokeDasharray="6 2" />
      </svg>
    </StatusMini>
  </StatusBar>
)

const MarkLogo = () => (
  <MarkLogoBox>
    <svg width="80" height="80" viewBox="0 0 80 80">
      <path d="M9 52 A33 33 0 1 1 71 52" fill="none" stroke="#d4634c" strokeWidth="11" />
      <path d="M73 42 A33 33 0 0 1 40 73" fill="none" stroke="#eccb48" strokeWidth="11" />
      <text x="40" y="59" textAnchor="middle" fontSize="50" fontWeight="900" fill="#eccb48" fontFamily={SANS}>美</text>
      <circle cx="40" cy="7" r="4" fill="#eccb48" />
    </svg>
  </MarkLogoBox>
)

export default function App() {
  return (
    <>
      <GlobalStyle />
      <Window>
        <MenuBar>
          <LeftMenu>
            <Logo />
            <AppTitle>通达信金融终端</AppTitle>
            {['行情', '市场', '资讯', '数据', '专题', '发现', '交易', '行业', '热点'].map(m => <MenuItem key={m}>{m}</MenuItem>)}
            <MenuItem $serif>L1L2</MenuItem>
          </LeftMenu>
          <AlertGroup>
            <span>交易未登录</span>
            <span>湘邮科技</span>
          </AlertGroup>
          <RightMenu>
            {['功能', '版面', '公式', '选项', '帮助'].map(m => <RightItem key={m}>{m}</RightItem>)}
            <ClockCell><span>22:06:23</span><span>周一</span></ClockCell>
            <WindowButtons>
              <ChevronLeft size={26} strokeWidth={2.6} />
              <Minus size={20} strokeWidth={3.4} />
              <RestoreIcon />
              <CloseIcon size={24} strokeWidth={2.6} />
            </WindowButtons>
          </RightMenu>
        </MenuBar>
        <Body>
          <Main>
            <ToolStrip>
              <ToggleCell><ToggleIcon /></ToggleCell>
              <PeriodList>
                {['分时', '1分钟', '5分钟', '15分钟', '30分钟', '60分钟', '日线', '周线', '月线', '多周期', '更多 〉'].map(p => <Period key={p} $active={p === '日线'}>{p}</Period>)}
              </PeriodList>
              <ToolCells>
                {[['复权', 51], ['叠加', 52], ['统计', 52], ['画线', 53], ['F10', 53], ['标记', 52], ['-自选', 52], ['返回', 56]].map(([t, w]) => <ToolCell key={t} $w={w}>{t}</ToolCell>)}
              </ToolCells>
            </ToolStrip>
            <HeaderRow $h={26}>
              <HeaderText $pad={3}>
                <Cjk $track={0.3}>湘邮科技(日线)</Cjk>
                <RoundIcon $left={9} $right={7}><Chevron /></RoundIcon>
                <Cjk>三线扭转主图</Cjk>
                <HeaderValue $gap={9} $c="#808080" $size={17}>MM: 16.31</HeaderValue>
                <HeaderValue $gap={9} $c="#e8e800">FL: 16.99</HeaderValue>
                <HeaderValue $gap={9} $c="#f01818">FS: 15.63</HeaderValue>
              </HeaderText>
              <AxisHead>
                <AxisHeadIcons>
                  <svg width="14" height="18" viewBox="0 0 14 18"><path d="M7 2 L13 9 L7 16 L1 9 Z" fill="none" stroke="#707070" strokeWidth="1.2" /></svg>
                  <ToggleIcon />
                </AxisHeadIcons>
              </AxisHead>
            </HeaderRow>
            <PriceFrame><PriceChart /></PriceFrame>
            <HeaderRow $h={25}>
              <HeaderText $pad={3}>
                <RoundIcon $left={0} $right={8}><Chevron /></RoundIcon>
                <HeaderValue>VOLUME: 45458.00</HeaderValue>
                <HeaderValue $gap={8}>MA5: 44354.60</HeaderValue>
                <HeaderValue $gap={8} $c="#e8e800">MA10: 43823.50</HeaderValue>
              </HeaderText>
              <AxisHead />
            </HeaderRow>
            <VolumeFrame><VolumeChart /></VolumeFrame>
            <BottomTabs />
          </Main>
          <Side>
            <QuotePanel />
            <ToolRail />
          </Side>
        </Body>
        <Status />
        <Watermark>
          <MarkTitle>公式指标网</MarkTitle>
          <MarkLogo />
          <MarkUrl>www.9m8.cn</MarkUrl>
          <MarkGhost>www.gszx.com.cn</MarkGhost>
        </Watermark>
      </Window>
    </>
  )
}
